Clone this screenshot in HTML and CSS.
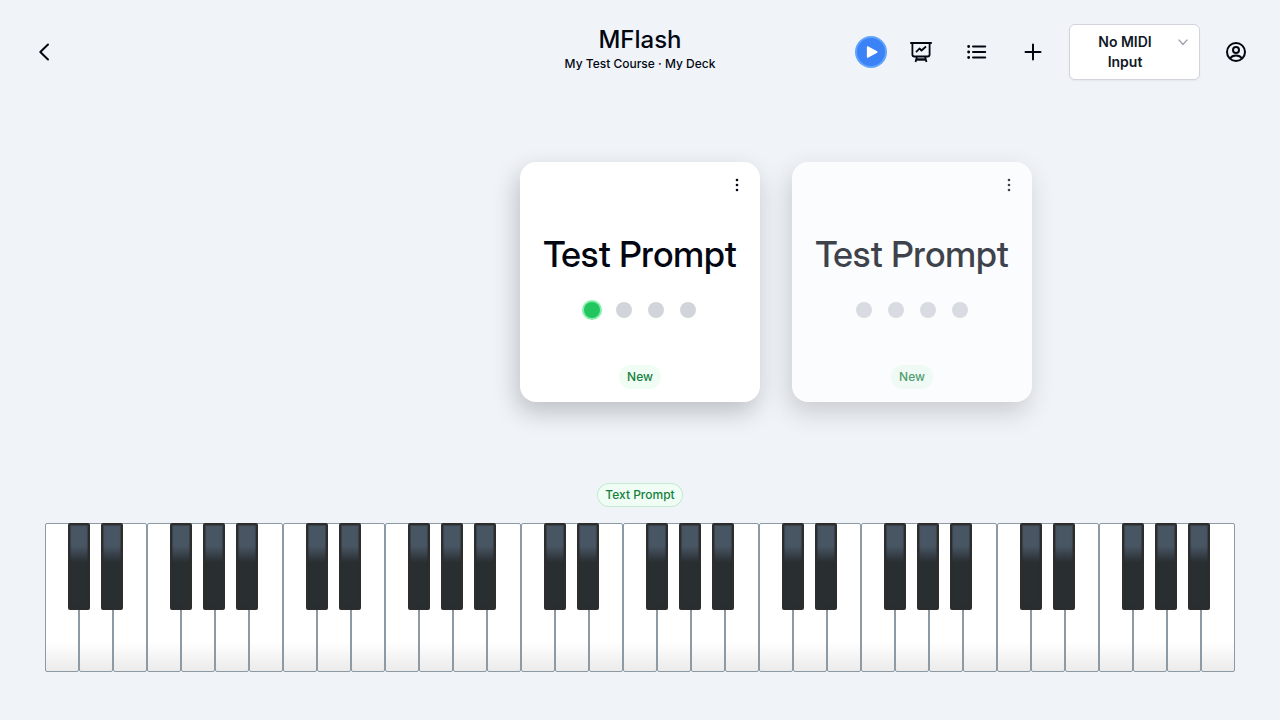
FILE: index.html
```html
<!DOCTYPE html>
<html lang="en">
<head>
<meta charset="utf-8">
<meta name="viewport" content="width=device-width, initial-scale=1">
<title>MFlash</title>
<link rel="stylesheet" href="styles.css">
</head>
<body>
<header class="topbar">
  <div class="topbar-start">
    <a class="icon-button" href="#" aria-label="Back">
      <svg width="24" height="24" viewBox="0 0 24 24" fill="none" stroke="currentColor" stroke-width="2" stroke-linecap="round" stroke-linejoin="round"><path d="M16 4.500 8.300 12 16 19.500"/></svg>
    </a>
  </div>
  <div class="heading">
    <h1 class="title">MFlash</h1>
    <p class="subtitle">My Test Course · My Deck</p>
  </div>
  <div class="topbar-end">
    <button class="play" type="button" aria-label="Play">
      <svg width="28" height="28" viewBox="0 0 28 28" fill="currentColor" stroke="currentColor" stroke-width="1.500" stroke-linejoin="round"><path d="M10.600 9v10L19.800 14z"/></svg>
    </button>
    <button class="icon-button" type="button" aria-label="Statistics">
      <svg width="24" height="24" viewBox="0 0 24 24" fill="none" stroke="currentColor" stroke-width="1.800" stroke-linejoin="round"><path d="M1.200 3h21.600M3.400 3v11.500a2 2 0 0 0 2 2h13.200a2 2 0 0 0 2-2V3M8 16.500l-1.500 5.500M16 16.500l1.500 5.500"/><path d="M7.500 19.500h9" stroke-width="2.400"/><path d="m7 12.200 3.500-3.700 2 2 4.500-4"/></svg>
    </button>
    <button class="icon-button" type="button" aria-label="Card list">
      <svg width="24" height="24" viewBox="0 0 24 24" fill="none" stroke="currentColor" stroke-width="2" stroke-linecap="round"><path d="M8 6.500h12.200M8 12h12.200M8 17.500h12.200"/><path d="M3.600 6.500h.1M3.600 12h.1M3.600 17.500h.1" stroke-width="2.800"/></svg>
    </button>
    <button class="icon-button" type="button" aria-label="Add card">
      <svg width="24" height="24" viewBox="0 0 24 24" fill="none" stroke="currentColor" stroke-width="2" stroke-linecap="round"><path d="M12 4.500v15M4.500 12h15"/></svg>
    </button>
    <button class="midi" type="button" aria-haspopup="listbox">
      <span class="midi-label">No MIDI Input</span>
      <svg class="midi-chevron" width="20" height="20" viewBox="0 0 20 20" fill="none" stroke="currentColor" stroke-width="1.300" stroke-linecap="round" stroke-linejoin="round"><path d="m6 8 4 4.500L14 8"/></svg>
    </button>
    <button class="icon-button" type="button" aria-label="Account">
      <svg width="24" height="24" viewBox="0 0 24 24" fill="none" stroke="currentColor" stroke-width="2"><circle cx="12" cy="12" r="9"/><circle cx="12" cy="10" r="3"/><path d="M6 18.500c1.300-2 3.600-3 6-3s4.700 1 6 3"/></svg>
    </button>
  </div>
</header>

<main class="practice">
  <section class="cards" aria-label="Cards">
    <article class="card">
      <button class="card-menu" type="button" aria-label="Card options">
        <svg width="16" height="16" viewBox="0 0 16 16" fill="currentColor"><circle cx="8" cy="3" r="1.300"/><circle cx="8" cy="8" r="1.300"/><circle cx="8" cy="13" r="1.300"/></svg>
      </button>
      <h2 class="prompt">Test Prompt</h2>
      <div class="dots"><span class="dot dot-current"></span><span class="dot"></span><span class="dot"></span><span class="dot"></span></div>
      <span class="badge">New</span>
    </article>
    <article class="card card-next">
      <button class="card-menu" type="button" aria-label="Card options">
        <svg width="16" height="16" viewBox="0 0 16 16" fill="currentColor"><circle cx="8" cy="3" r="1.300"/><circle cx="8" cy="8" r="1.300"/><circle cx="8" cy="13" r="1.300"/></svg>
      </button>
      <h2 class="prompt">Test Prompt</h2>
      <div class="dots"><span class="dot"></span><span class="dot"></span><span class="dot"></span><span class="dot"></span></div>
      <span class="badge">New</span>
    </article>
  </section>

  <span class="badge badge-outlined">Text Prompt</span>

  <section class="keyboard" aria-label="Piano">
    <div class="octave">
      <button class="key" aria-label="C2"></button><button class="key" aria-label="D2"></button><button class="key" aria-label="E2"></button><button class="key" aria-label="F2"></button><button class="key" aria-label="G2"></button><button class="key" aria-label="A2"></button><button class="key" aria-label="B2"></button>
      <button class="sharp sharp-c" aria-label="C♯2"></button><button class="sharp sharp-d" aria-label="D♯2"></button><button class="sharp sharp-f" aria-label="F♯2"></button><button class="sharp sharp-g" aria-label="G♯2"></button><button class="sharp sharp-a" aria-label="A♯2"></button>
    </div>
    <div class="octave">
      <button class="key" aria-label="C3"></button><button class="key" aria-label="D3"></button><button class="key" aria-label="E3"></button><button class="key" aria-label="F3"></button><button class="key" aria-label="G3"></button><button class="key" aria-label="A3"></button><button class="key" aria-label="B3"></button>
      <button class="sharp sharp-c" aria-label="C♯3"></button><button class="sharp sharp-d" aria-label="D♯3"></button><button class="sharp sharp-f" aria-label="F♯3"></button><button class="sharp sharp-g" aria-label="G♯3"></button><button class="sharp sharp-a" aria-label="A♯3"></button>
    </div>
    <div class="octave">
      <button class="key" aria-label="C4"></button><button class="key" aria-label="D4"></button><button class="key" aria-label="E4"></button><button class="key" aria-label="F4"></button><button class="key" aria-label="G4"></button><button class="key" aria-label="A4"></button><button class="key" aria-label="B4"></button>
      <button class="sharp sharp-c" aria-label="C♯4"></button><button class="sharp sharp-d" aria-label="D♯4"></button><button class="sharp sharp-f" aria-label="F♯4"></button><button class="sharp sharp-g" aria-label="G♯4"></button><button class="sharp sharp-a" aria-label="A♯4"></button>
    </div>
    <div class="octave">
      <button class="key" aria-label="C5"></button><button class="key" aria-label="D5"></button><button class="key" aria-label="E5"></button><button class="key" aria-label="F5"></button><button class="key" aria-label="G5"></button><button class="key" aria-label="A5"></button><button class="key" aria-label="B5"></button>
      <button class="sharp sharp-c" aria-label="C♯5"></button><button class="sharp sharp-d" aria-label="D♯5"></button><button class="sharp sharp-f" aria-label="F♯5"></button><button class="sharp sharp-g" aria-label="G♯5"></button><button class="sharp sharp-a" aria-label="A♯5"></button>
    </div>
    <div class="octave">
      <button class="key" aria-label="C6"></button><button class="key" aria-label="D6"></button><button class="key" aria-label="E6"></button><button class="key" aria-label="F6"></button><button class="key" aria-label="G6"></button><button class="key" aria-label="A6"></button><button class="key" aria-label="B6"></button>
      <button class="sharp sharp-c" aria-label="C♯6"></button><button class="sharp sharp-d" aria-label="D♯6"></button><button class="sharp sharp-f" aria-label="F♯6"></button><button class="sharp sharp-g" aria-label="G♯6"></button><button class="sharp sharp-a" aria-label="A♯6"></button>
    </div>
  </section>
</main>
</body>
</html>
```
FILE: styles.css
```css
* {
  box-sizing: border-box;
}

body {
  margin: 0;
  min-height: 100vh;
  display: flex;
  flex-direction: column;
  background: #f0f4f9;
  color: #030712;
  font-family: Inter, "Liberation Sans", sans-serif;
  overflow-x: hidden;
}

button {
  margin: 0;
  padding: 0;
  border: 0;
  background: none;
  color: inherit;
  font: inherit;
  cursor: pointer;
}

svg {
  display: block;
  flex: none;
}

h1,
h2,
p {
  margin: 0;
}

.topbar {
  display: grid;
  grid-template-columns: 1fr auto 1fr;
  align-items: center;
  padding: 24px;
}

.topbar-start,
.topbar-end {
  display: flex;
  align-items: center;
}

.topbar-end {
  justify-content: flex-end;
  gap: 16px;
}

.heading {
  align-self: start;
  text-align: center;
}

.title {
  font-size: 24px;
  line-height: 32px;
  font-weight: 500;
}

.subtitle {
  font-size: 12px;
  line-height: 16px;
  font-weight: 500;
}

.icon-button {
  display: flex;
  align-items: center;
  justify-content: center;
  width: 40px;
  height: 40px;
  color: inherit;
}

.play {
  border-radius: 50%;
  background: #3b82f6;
  box-shadow: 0 0 0 2px #60a5fa;
  color: #fff;
}

.midi {
  display: flex;
  gap: 8px;
  padding: 7px 6px 7px 15px;
  border: 1px solid #d1d5db;
  border-radius: 6px;
  background: #fff;
  box-shadow: 0 1px 2px rgb(0 0 0 / 5%);
  color: #111827;
  font-size: 14px;
  line-height: 20px;
  font-weight: 600;
}

.midi-label {
  width: 80px;
}

.midi-chevron {
  color: #9ca3af;
}

.practice {
  display: flex;
  flex-direction: column;
  align-items: center;
  padding: 58px 45px 48px;
}

.cards {
  align-self: stretch;
  display: flex;
  gap: 32px;
  padding-left: calc(50% - 120px);
  margin-bottom: 81px;
}

.card {
  flex: none;
  display: flex;
  flex-direction: column;
  align-items: center;
  width: 240px;
  height: 240px;
  padding: 15px 15px 13px;
  border-radius: 16px;
  background: #fff;
  box-shadow: -3px 10px 24px rgb(0 0 0 / 22%);
}

.card-next {
  opacity: 0.75;
}

.card-menu {
  align-self: flex-end;
  margin-bottom: 41px;
}

.prompt {
  margin-bottom: 28px;
  font-family: "Inter Display", Inter, "Liberation Sans", sans-serif;
  font-size: 36px;
  line-height: 40px;
  font-weight: 500;
  white-space: nowrap;
}

.dots {
  display: flex;
  gap: 16px;
  margin-bottom: auto;
}

.dot {
  width: 16px;
  height: 16px;
  border-radius: 50%;
  background: #d1d5db;
}

.dot-current {
  background: #22c55e;
  box-shadow: 0 0 0 2px #86efac;
}

.badge {
  padding: 4px 8px;
  border-radius: 12px;
  background: #f0fdf4;
  color: #15803d;
  font-size: 12px;
  line-height: 16px;
  font-weight: 500;
}

.badge-outlined {
  margin-bottom: 16px;
  box-shadow: inset 0 0 0 1px rgb(22 163 74 / 20%);
}

.keyboard {
  align-self: stretch;
  display: flex;
  height: 149px;
}

.octave {
  position: relative;
  flex: 1;
  display: flex;
}

.key {
  flex: 1;
  border: 1px solid #8b9aa5;
  border-radius: 2px;
  background: linear-gradient(#fff 80%, #ebebeb);
}

.sharp {
  position: absolute;
  top: 0;
  width: 9.244%;
  height: 87px;
  border: 2px solid #2d2d2d;
  border-radius: 2px;
  background: linear-gradient(#485664 25%, #292e31 45%);
  box-shadow: inset 0 0 1px 1px rgb(45 45 45 / 50%);
}

.sharp-c {
  left: 9.664%;
}

.sharp-d {
  left: 23.530%;
}

.sharp-f {
  left: 52.521%;
}

.sharp-g {
  left: 66.387%;
}

.sharp-a {
  left: 80.252%;
}
```
